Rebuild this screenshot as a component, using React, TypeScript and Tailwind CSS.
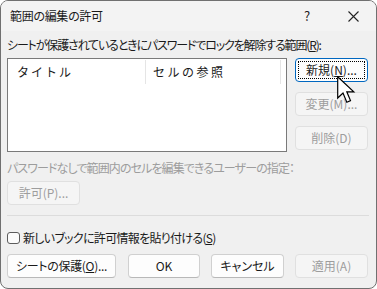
import React from "react";

const font = "[font-family:'Noto_Sans_CJK_JP','Noto_Sans',sans-serif]";

function Btn({
  children,
  w,
  disabled,
  focused,
}: {
  children: React.ReactNode;
  w: string;
  disabled?: boolean;
  focused?: boolean;
}) {
  if (focused) {
    return (
      <div className={`${w} h-[24px] rounded-[4px] border border-[#0067c0] bg-[#fdfdfd] p-[2px] shrink-0`}>
        <div className="h-full w-full border border-dotted border-black flex items-center justify-center text-[12px] text-[#1a1a1a] leading-none">
          {children}
        </div>
      </div>
    );
  }
  return (
    <div
      className={`${w} h-[24px] rounded-[4px] border shrink-0 flex items-center justify-center text-[12px] leading-none ${
        disabled
          ? "border-[#e0e0e0] bg-[#f5f5f5] text-[#9d9d9d]"
          : "border-[#d0d0d0] border-b-[#b8b8b8] bg-[#fdfdfd] text-[#1a1a1a]"
      }`}
    >
      {children}
    </div>
  );
}

export default function App() {
  return (
    <div className={`w-[377px] h-[289px] bg-white ${font} [font-feature-settings:'palt'] text-[12px] text-[#1a1a1a]`}>
      <div className="relative h-full w-full rounded-[8px] border border-[#707070] bg-[#f0f0f0] overflow-hidden flex flex-col">
        {/* title bar */}
        <div className="h-[30px] bg-[#f3f3f3] flex items-center pl-[9px] shrink-0">
          <span className="text-[12px] tracking-[-0.3px]">範囲の編集の許可</span>
          <div className="ml-auto flex items-center">
            <span className="w-[46px] text-center text-[13px] text-[#222]">?</span>
            <span className="w-[46px] flex justify-center">
              <svg width="11" height="11" viewBox="0 0 11 11">
                <path d="M0.5 0.5 L10.5 10.5 M10.5 0.5 L0.5 10.5" stroke="#222" strokeWidth="1.1" />
              </svg>
            </span>
          </div>
        </div>
        {/* body */}
        <div className="flex flex-col pl-[6px] pr-[7px]">
          <div className="mt-[6px] h-[16px] leading-[16px] tracking-[-1.15px] whitespace-nowrap">
            シートが保護されているときにパスワードでロックを解除する範囲(<span className="underline">R</span>):
          </div>
          <div className="mt-[5px] flex gap-[8px]">
            <div className="w-[280px] h-[94px] border border-[#7a7a7a] bg-white flex items-start pt-[1px]">
              <div className="w-[138px] h-[24px] border-r border-[#e5e5e5] pl-[9px] flex items-center text-[#1a1a1a] text-[12px] tracking-[2px] [font-feature-settings:normal]">
                タイトル
              </div>
              <div className="flex-1 h-[24px] border-r border-[#e5e5e5] pl-[7px] flex items-center text-[12px] tracking-[2.5px] [font-feature-settings:normal]">
                セルの参照
              </div>
              <div className="w-[5px]" />
            </div>
            <div className="flex flex-col gap-[10px]">
              <Btn w="w-[73px]" focused>
                新規(<span className="underline">N</span>)...
              </Btn>
              <Btn w="w-[73px]" disabled>
                変更(M)...
              </Btn>
              <Btn w="w-[73px]" disabled>
                削除(D)
              </Btn>
            </div>
          </div>
          <div className="mt-[8px] h-[16px] leading-[16px] text-[#9d9d9d] tracking-[-0.9px] whitespace-nowrap">
            パスワードなしで範囲内のセルを編集できるユーザーの指定：
          </div>
          <div className="mt-[5px]">
            <Btn w="w-[73px]" disabled>
              許可(P)...
            </Btn>
          </div>
          <div className="mt-[10px] h-px bg-[#dcdcdc]" />
          <div className="mt-[16px] flex items-center h-[12px]">
            <div className="w-[13px] h-[12px] rounded-[3px] border border-[#5c5c5c] bg-[#fbfbfb]" />
            <span className="ml-[3px] leading-none tracking-[-0.7px] whitespace-nowrap">
              新しいブックに許可情報を貼り付ける(<span className="underline">S</span>)
            </span>
          </div>
          <div className="mt-[10px] flex">
            <Btn w="w-[109px]">
              <span className="tracking-[-0.3px]">
                シートの保護(<span className="underline">O</span>)...
              </span>
            </Btn>
            <div className="ml-[12px]">
              <Btn w="w-[72px]">OK</Btn>
            </div>
            <div className="ml-[11px]">
              <Btn w="w-[73px]">キャンセル</Btn>
            </div>
            <div className="ml-[11px]">
              <Btn w="w-[73px]" disabled>
                適用(A)
              </Btn>
            </div>
          </div>
        </div>
        {/* mouse cursor */}
        <svg className="absolute left-[336px] top-[75px]" width="19" height="28" viewBox="0 0 19 28">
          <path
            d="M0.7 0.7 L0.7 22 L6 17 L9.8 26.2 L13.5 24.6 L9.8 15.8 L16.8 15.8 Z"
            fill="white"
            stroke="black"
            strokeWidth="1.2"
            strokeLinejoin="miter"
          />
        </svg>
      </div>
    </div>
  );
}
